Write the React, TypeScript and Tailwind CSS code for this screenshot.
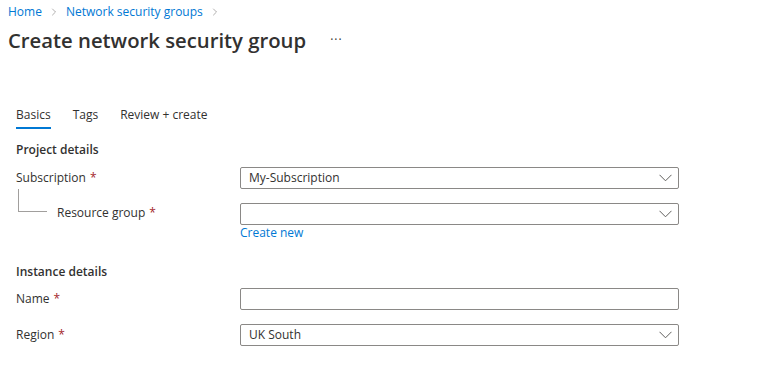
import { ChevronRight } from 'lucide-react';

const FONT = { fontFamily: '"Open Sans", "Liberation Sans", sans-serif' };

function Required() {
  return <span className="ml-1 text-[#a4262c]">*</span>;
}

function Chevron() {
  return (
    <svg width="13" height="8" viewBox="0 0 13 8" fill="none" className="text-[#605e5c]">
      <path d="M0.5 0.8 L6.5 6.8 L12.5 0.8" stroke="currentColor" strokeWidth="1" />
    </svg>
  );
}

function Select({ value }: { value?: string }) {
  return (
    <div className="flex h-[22px] w-[439px] items-center justify-between rounded-[2px] border border-[#8a8886] pl-2 pr-[6px]">
      <span className="text-[12px] text-[#323130]">{value}</span>
      <Chevron />
    </div>
  );
}

export default function App() {
  return (
    <div className="h-[389px] w-[767px] bg-white text-[#323130]" style={FONT}>
      {/* Breadcrumb */}
      <div className="flex items-center gap-[6px] pl-2 pt-[3px] text-[12px] leading-[18px] text-[#0078d4]">
        <span>Home</span>
        <ChevronRight size={12} strokeWidth={1} className="text-[#605e5c]" />
        <span>Network security groups</span>
        <ChevronRight size={12} strokeWidth={1} className="text-[#605e5c]" />
      </div>

      {/* Title */}
      <div className="flex items-center pl-2 pt-[5px]">
        <h1 className="text-[20.3px] font-semibold leading-[28px]">Create network security group</h1>
        <span className="ml-[24px] text-[12px] leading-none tracking-[1px] text-[#323130]">···</span>
      </div>

      {/* Tabs */}
      <div className="mt-[51px] flex gap-[22px] pl-4 text-[12px]">
        <div className="flex flex-col">
          <span className="leading-[20px]">Basics</span>
          <div className="mt-[2px] h-[2px] bg-[#0078d4]" />
        </div>
        <span className="leading-[20px]">Tags</span>
        <span className="leading-[20px]">Review + create</span>
      </div>

      {/* Form */}
      <div className="mt-[11px] pl-4 pr-[88px] text-[12px]">
        <h2 className="font-semibold leading-[20px]">Project details</h2>

        <div className="mt-[7px] flex items-center">
          <div className="w-[224px]">
            Subscription
            <Required />
          </div>
          <Select value="My-Subscription" />
        </div>

        <div className="mt-[14px] flex items-start">
          <div className="relative flex w-[224px] pl-[41px]">
            <div className="absolute left-[2px] top-[-14px] h-[23px] w-[29px] border-b border-l border-[#a19f9d]" />
            <span className="leading-[20px]">
              Resource group
              <Required />
            </span>
          </div>
          <div className="flex flex-col">
            <Select />
            <span className="leading-[16px] text-[#0078d4]">Create new</span>
          </div>
        </div>

        <h2 className="mt-[21px] font-semibold leading-[20px]">Instance details</h2>

        <div className="mt-[6px] flex items-center">
          <div className="w-[224px]">
            Name
            <Required />
          </div>
          <div className="h-[22px] w-[439px] rounded-[2px] border border-[#8a8886]" />
        </div>

        <div className="mt-[14px] flex items-center">
          <div className="w-[224px]">
            Region
            <Required />
          </div>
          <Select value="UK South" />
        </div>
      </div>
    </div>
  );
}
